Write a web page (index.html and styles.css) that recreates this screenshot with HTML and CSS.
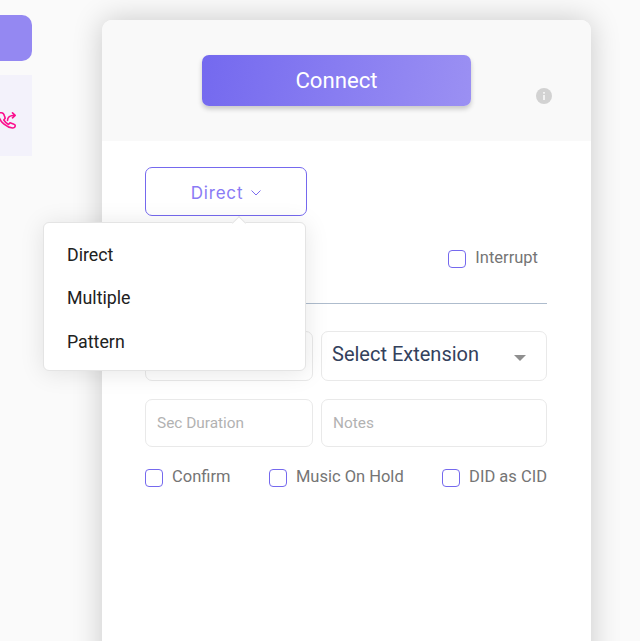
FILE: index.html
```html
<!DOCTYPE html>
<html lang="en">
<head>
<meta charset="utf-8">
<title>Connect</title>
<link rel="stylesheet" href="styles.css">
</head>
<body>
<div class="page">
  <aside class="side">
    <div class="side-top"></div>
    <div class="side-item">
      <svg class="phone" viewBox="-8 108 24 24" width="24" height="24" fill="none" stroke="#fb0f8d" stroke-width="1.600" stroke-linecap="round" stroke-linejoin="round">
        <path d="M-1 112.800H1.500C3 112.800 4 114 4.500 116L5.200 118.300 3.800 120C5 122 6.500 123.500 8.500 124.500L10 122.800 14 124.200C15 124.500 15.300 125 15.200 126 15 127.500 14 128 12.500 128 6.500 127.500 .5 122 -1 117"/>
        <path d="M7.500 120.500C7.500 117 9.500 115.300 15 115.300M12.500 112.800 15.200 115.300 12.500 117.800"/>
      </svg>
    </div>
  </aside>
  <main class="card">
    <header class="card-head">
      <button class="connect" type="button">Connect</button>
      <svg class="info" viewBox="0 0 16 16" width="16" height="16">
        <circle cx="8" cy="8" r="8" fill="#d2d2d2"/>
        <rect x="7.200" y="7" width="1.600" height="5" fill="#fafafa"/>
        <rect x="7.200" y="4" width="1.600" height="1.700" fill="#fafafa"/>
      </svg>
    </header>
    <section class="card-body">
      <button class="type-btn" type="button">Direct
        <svg class="chev" viewBox="0 0 10 6" width="10" height="6" fill="none" stroke="#7c6cf0" stroke-width="1"><path d="M.5.500 5 5 9.500.5"/></svg>
      </button>
      <div class="row-interrupt">
        <label class="check"><span class="box"></span>Interrupt</label>
      </div>
      <div class="rule"></div>
      <div class="fields">
        <div class="field"></div>
        <div class="field select"><span>Select Extension</span><span class="caret"></span></div>
        <div class="field short"><span class="ph">Sec Duration</span></div>
        <div class="field short"><span class="ph">Notes</span></div>
      </div>
      <div class="checks">
        <label class="check"><span class="box"></span>Confirm</label>
        <label class="check"><span class="box"></span>Music On Hold</label>
        <label class="check"><span class="box"></span>DID as CID</label>
      </div>
    </section>
  </main>
  <div class="menu">
    <span class="menu-arrow"></span>
    <div class="menu-item">Direct</div>
    <div class="menu-item">Multiple</div>
    <div class="menu-item">Pattern</div>
  </div>
</div>
</body>
</html>
```
FILE: styles.css
```css
* { box-sizing: border-box; }
html, body { margin: 0; height: 100%; overflow: hidden; }
body { background: #fafafa; font-family: Roboto, sans-serif; }
.page { position: relative; display: flex; gap: 70px; height: 641px; overflow: hidden; }

.side { width: 32px; flex: none; padding-top: 15px; display: flex; flex-direction: column; gap: 14px; overflow: hidden; }
.side-top { height: 46px; background: #9488f2; border-radius: 0 10px 10px 0; }
.side-item { height: 81px; background: #f3f2fb; display: flex; align-items: center; justify-content: flex-end; padding-right: 16px; padding-top: 9px; flex: none; }
.phone { flex: none; margin-left: -24px; }

.card { width: 489px; flex: none; height: 700px; margin-top: 20px; background: #fff; border-radius: 10px 10px 0 0; box-shadow: 0 0 30px rgba(0,0,0,.2); overflow: hidden; }
.card-head { position: relative; height: 121px; background: #f9f9f9; padding: 35px 0 0 100px; }
.connect { display: block; width: 269px; height: 51px; border: 0; border-radius: 7px; background: linear-gradient(100deg, #7469ef, #9b90f3); color: #fff; font: 450 22.200px Roboto, sans-serif; box-shadow: 0 3px 5px rgba(0,0,0,.2); padding: 0 0 1px; }
.info { position: absolute; left: 434px; top: 68px; }

.card-body { padding: 26px 44px 0 43px; }
.type-btn { display: flex; align-items: center; justify-content: center; gap: 8px; width: 162px; height: 49px; background: #fff; border: 1px solid #7569ee; border-radius: 7px; color: #8a7bf5; font: 400 17px Inter, sans-serif; letter-spacing: .8px; padding: 2px 0 0; }
.row-interrupt { height: 87px; display: flex; justify-content: flex-end; align-items: flex-start; padding: 32px 9px 0 0; }
.rule { height: 1px; background: #aebccd; }
.fields { display: grid; grid-template-columns: 168px 226px; column-gap: 8px; row-gap: 18px; margin-top: 27px; }
.field { height: 50px; border: 1px solid #e9e9e9; border-radius: 7px; background: #fff; }
.select { display: flex; align-items: center; justify-content: space-between; padding: 0 20px 5px 10px; color: #33415c; font-size: 20px; }
.caret { width: 0; height: 0; border-left: 6px solid transparent; border-right: 6px solid transparent; border-top: 6px solid #8f8f8f; margin-top: 9px; }
.short { height: 48px; display: flex; align-items: center; padding: 0 11px; }
.ph { color: #b2b2b2; font-size: 15.400px; }
.checks { display: flex; justify-content: space-between; margin-top: 20px; }
.check { display: flex; align-items: center; gap: 9px; color: #757575; font-size: 16.500px; line-height: 18px; }
.box { width: 18px; height: 18px; border: 1px solid #7569ee; border-radius: 4px; background: #fff; flex: none; margin-top: 2px; }

.menu { position: absolute; left: 43px; top: 222px; width: 263px; height: 149px; padding: 10.800px 0; background: #fff; border: 1px solid #e4e4e4; border-radius: 6px; box-shadow: 0 2px 24px rgba(0,0,0,.1); }
.menu-arrow { position: absolute; left: 190px; top: -5px; width: 10px; height: 10px; background: #fff; border-left: 1px solid #e4e4e4; border-top: 1px solid #e4e4e4; transform: rotate(45deg); }
.menu-item { position: relative; height: 43.500px; line-height: 42px; padding-left: 23px; color: #212121; font-size: 17.800px; }
```
